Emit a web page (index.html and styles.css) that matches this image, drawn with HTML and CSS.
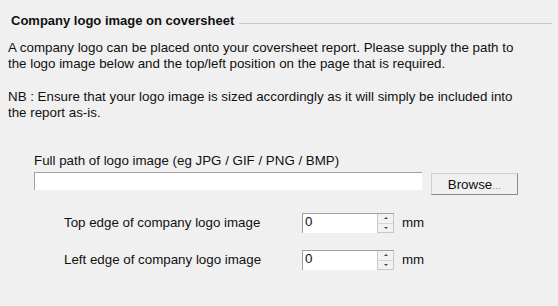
FILE: index.html
```html
<!DOCTYPE html>
<html lang="en">
<head>
    <meta charset="UTF-8">
    <title>Coversheet logo</title>
    <link rel="stylesheet" href="styles.css">
</head>
<body>
    <div class="panel">
        <div class="legend">
            <span class="legend-title">Company logo image on coversheet</span>
            <span class="legend-line"></span>
        </div>

        <p class="note">A company logo can be placed onto your coversheet report. Please supply the path to the logo image below and the top/left position on the page that is required.</p>
        <p class="note">NB : Ensure that your logo image is sized accordingly as it will simply be included into the report as-is.</p>

        <div class="path-block">
            <label for="logoPath">Full path of logo image (eg JPG / GIF / PNG / BMP)</label>
            <div class="path-row">
                <input type="text" id="logoPath" class="path-input">
                <button type="button" class="browse-btn">Browse<span class="dots">…</span></button>
            </div>
        </div>

        <div class="pos-rows">
            <div class="pos-row">
                <label for="topEdge">Top edge of company logo image</label>
                <div class="spin">
                    <input type="text" id="topEdge" value="0">
                    <div class="spin-btns">
                        <span class="spin-up"></span>
                        <span class="spin-down"></span>
                    </div>
                </div>
                <span class="unit">mm</span>
            </div>
            <div class="pos-row">
                <label for="leftEdge">Left edge of company logo image</label>
                <div class="spin">
                    <input type="text" id="leftEdge" value="0">
                    <div class="spin-btns">
                        <span class="spin-up"></span>
                        <span class="spin-down"></span>
                    </div>
                </div>
                <span class="unit">mm</span>
            </div>
        </div>
    </div>
</body>
</html>
```

FILE: styles.css
```css
body {
    margin: 0;
    background-color: #f0f0f0;
    font-family: "Liberation Sans", Arial, sans-serif;
    font-size: 13.33px;
    line-height: 16px;
    color: #111;
}

.panel {
    padding: 13px 6px 0 8px;
}

.legend {
    display: flex;
    align-items: center;
    gap: 5px;
    padding-left: 3px;
}

.legend-title {
    font-weight: bold;
    font-size: 13px;
}

.legend-line {
    flex: 1;
    border-top: 1px solid #c8c8c8;
    margin-top: 5px;
}

.note {
    margin: 11px 0 0 0;
    max-width: 524px;
}

.note + .note {
    margin-top: 17px;
}

.path-block {
    margin-top: 32px;
    padding-left: 26px;
}

.path-block label {
    display: block;
}

.path-row {
    display: flex;
    align-items: flex-start;
    gap: 9px;
    margin-top: 3px;
}

.path-input {
    width: 388px;
    height: 18px;
    box-sizing: border-box;
    margin: 0;
    background: #fff;
    border: none;
    border-top: 1px solid #a0a0a0;
    border-left: 1px solid #a0a0a0;
    outline: none;
}

.browse-btn {
    width: 87px;
    height: 22px;
    margin: 1px 0 0 0;
    padding: 0;
    font-family: inherit;
    font-size: 13.33px;
    color: #111;
    background-color: #f0f0f0;
    border: 1px solid #d0d0d0;
    border-right-color: #8a8a8a;
    border-bottom-color: #8a8a8a;
}

.dots {
    color: #888;
    font-size: 9px;
}

.pos-rows {
    margin-top: 18px;
    padding-left: 56px;
    display: flex;
    flex-direction: column;
    gap: 17px;
}

.pos-row {
    display: flex;
    align-items: center;
}

.pos-row label {
    width: 238px;
}

.spin {
    display: flex;
    width: 92px;
    height: 20px;
    box-sizing: border-box;
    background: #fff;
    border-top: 1px solid #a0a0a0;
    border-left: 1px solid #a0a0a0;
}

.spin input {
    flex: 1;
    min-width: 0;
    margin: 0;
    padding: 0 0 0 2px;
    border: none;
    outline: none;
    font-family: inherit;
    font-size: 13.33px;
    height: 15px;
    background: transparent;
    color: #111;
}

.spin-btns {
    width: 17px;
    box-sizing: border-box;
    display: flex;
    flex-direction: column;
    border: 1px solid #c8c8c8;
    border-top: none;
    background: #f2f2f2;
}

.spin-up,
.spin-down {
    flex: 1;
    position: relative;
}

.spin-up {
    border-bottom: 1px solid #d4d4d4;
}

.spin-up::after,
.spin-down::after {
    content: "";
    position: absolute;
    left: 6px;
    top: 3px;
    border-left: 2px solid transparent;
    border-right: 2px solid transparent;
}

.spin-up::after {
    border-bottom: 2px solid #444;
}

.spin-down::after {
    top: 3px;
    border-top: 2px solid #444;
}

.unit {
    margin-left: 8px;
}
```
